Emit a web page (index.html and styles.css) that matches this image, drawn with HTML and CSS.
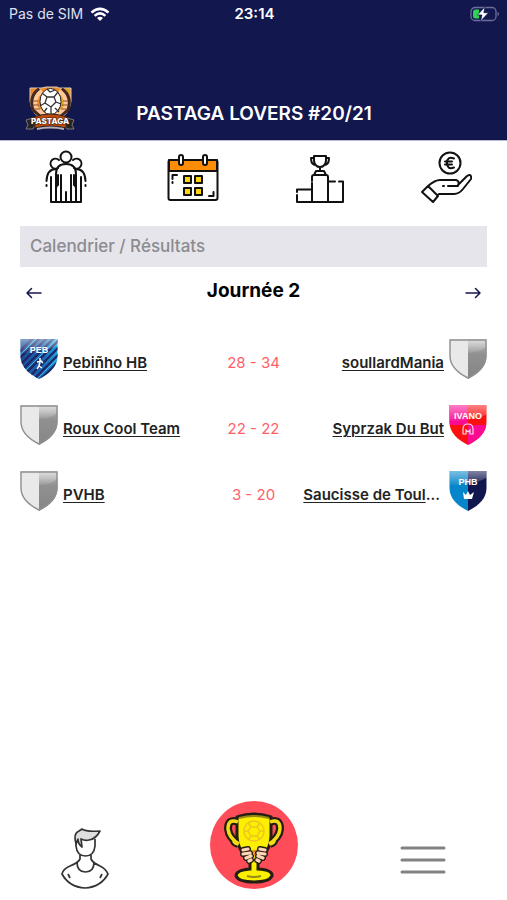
FILE: index.html
```html
<!DOCTYPE html>
<html lang="fr">
<head>
<meta charset="utf-8">
<meta name="viewport" content="width=device-width, initial-scale=1">
<title>Pastaga Lovers #20/21</title>
<link rel="stylesheet" href="styles.css">
</head>
<body>
<svg class="defs" width="0" height="0" aria-hidden="true">
  <defs>
    <linearGradient id="metal" x1="0" y1="0" x2="0" y2="1"><stop offset="0" stop-color="#c4c4c4"/><stop offset=".38" stop-color="#909090"/><stop offset="1" stop-color="#858585"/></linearGradient>
    <linearGradient id="sheen" x1="0" y1="0" x2="0" y2="1"><stop offset="0" stop-color="#fff" stop-opacity=".5"/><stop offset="1" stop-color="#fff" stop-opacity=".06"/></linearGradient>
    <linearGradient id="peb" x1="0" y1="0" x2="1" y2="0"><stop offset="0" stop-color="#1a4f9b"/><stop offset=".6" stop-color="#1a67b4"/><stop offset="1" stop-color="#1ba6e4"/></linearGradient>
    <clipPath id="shape"><path d="M0.500 1H37.500V18C37.500 29 29 36 19 41C9 36 .500 29 .500 18Z"/></clipPath>
    <symbol id="shield" viewBox="0 0 38 42">
      <g clip-path="url(#shape)"><path d="M0 0H19V42H0Z" fill="#e9e9e9"/><path d="M19 0H38V42H19Z" fill="url(#metal)"/><path d="M19 1H38V8Q31 15 19 15Z" fill="url(#sheen)"/></g>
      <path d="M1 2H37V18C37 28 29 35 19 40C9 35 1 28 1 18Z" fill="none" stroke="#8f8f8f" stroke-width="1.400"/>
    </symbol>
  </defs>
</svg>
<div class="screen">
  <header class="top">
    <div class="status">
      <div class="carrier"><span>Pas de SIM</span>
        <svg width="20" height="15" viewBox="0 0 20 15" fill="none" stroke="#fff" stroke-width="2.600"><path d="M1.500 5.600Q10-2 18.500 5.600M4.600 8.900Q10 4 15.400 8.900"/><path d="M7 11Q10 8.600 13 11L10 14Z" fill="#fff" stroke="none"/></svg>
      </div>
      <time>23:14</time>
      <svg class="battery" width="31" height="16" viewBox="0 0 31 16"><rect x="2" y="1.500" width="25" height="13" rx="4" fill="none" stroke="#6c6d98" stroke-width="1.300"/><path d="M28.500 6v4q1.500-.600 1.500-2t-1.500-2" fill="#6c6d98"/><path d="M6.500 3.500H10V12.500H6.500Q4 12.500 4 10V6Q4 3.500 6.500 3.500" fill="#31d158"/><path d="M16 .800L8.500 9H13L11.500 15.200L19.500 6.700H14.800Z" fill="#fff" stroke="#12174e" stroke-width=".700"/></svg>
    </div>
    <div class="brand">
      <svg class="crest" width="50" height="46" viewBox="0 0 50 46">
        <path d="M5 2H17L21 1H32L34 2H46V15Q45 26 37 31H14Q6 26 5 15Z" fill="#ef8b22" stroke="#d6cec8"/>
        <path d="M35 3H45V15Q44 23 37 29Z" fill="#dfa51b"/>
        <path d="M15 4Q6 10 9 23L18 30M36 4Q45 10 42 23L33 30" stroke="#432a21" stroke-width="6" fill="none"/>
        <path d="M17 5Q8 11 11 22L19 29M34 5Q43 11 40 22L32 29" stroke="#ffc99b" stroke-width="4" fill="none"/>
        <path d="M8 15h5M8 19h6M9 23h6M43 15h-5M43 19h-6M42 23h-6" stroke="#8b4d2b" stroke-width="1"/>
        <ellipse cx="25.500" cy="15.500" rx="10.500" ry="13" fill="#fff" stroke="#242125"/>
        <path d="M22 11h7l2 5-5 5-6-4ZM17 7l5 4M29 11l4-5M31 16l5 2M26 21v7M20 17l-5 3M19 26l3-4M30 22l4 4M22 3l3 3 5-2" fill="none" stroke="#333" stroke-width="1.300"/>
        <path d="M1 34L11 31V37L8 43H1L3 39ZM49 34L39 31V37L42 43H49L47 39Z" fill="#292421" stroke="#a39b99" stroke-width=".700"/>
        <path d="M9 31Q25 25 42 31L41 42Q25 38 10 42Z" fill="#bd4a08" stroke="#302724"/>
        <path d="M12 43Q25 40 39 43" stroke="#b7b0b7" stroke-width="2" fill="none"/>
        <text x="25" y="38" class="crest-text">PASTAGA</text>
      </svg>
      <h1>PASTAGA LOVERS #20/21</h1>
    </div>
  </header>
  <nav class="tabs" aria-label="Ligue">
    <a href="#equipes" aria-label="Équipes">
      <svg class="line" width="52" height="54" viewBox="0 0 52 54"><circle cx="26" cy="7" r="5.500"/><path d="M19 10A5 5 0 1 0 18 18M33 10A5 5 0 1 1 34 18"/><path d="M16 38V24Q16 14 26 14T36 24V38M16 38Q17 35 18 35V25M36 38Q35 35 34 35V25M21 25V51M31 25V51M26 42V51M16 38V51M36 38V51M11 27V52H41V27M16 19Q7 19 6.500 31M36 19Q45 19 45.500 31M6.500 35v1M45.500 35v1"/></svg>
    </a>
    <a href="#calendrier" aria-label="Calendrier" aria-current="page">
      <svg class="line" width="52" height="54" viewBox="0 0 52 54"><rect x="1.500" y="10" width="49" height="40" rx="2" fill="#fff"/><path d="M2 10H50V21H2Z" fill="#ff8c05"/><rect x="12" y="5" width="4" height="10" rx="2" fill="#fff"/><rect x="36" y="5" width="4" height="10" rx="2" fill="#fff"/><path d="M17 26h7v7h-7ZM28 26h7v7h-7ZM17 38h7v7h-7ZM28 38h7v7h-7Z" fill="#ffd510"/><path d="M5.500 29V25H10M5.500 32v1M46.500 42V46H42"/></svg>
    </a>
    <a href="#classement" aria-label="Classement">
      <svg class="line" width="52" height="54" viewBox="0 0 52 54"><path d="M20 6H32V11Q31 17 26 17T20 11ZM20 8H17Q17 15 22 15M32 8H35Q35 15 30 15M26 17V21M22 21H30L32 25H20ZM18 31V27Q18 25 20 25H32Q34 25 34 27V52M18 33V52M3 42V39.500H18M3 45V52H49V32M34 31.500H41M45 31.500H49V36"/></svg>
    </a>
    <a href="#paris" aria-label="Paris">
      <svg class="line" width="52" height="54" viewBox="0 0 52 54"><circle cx="29" cy="13" r="10.500"/><path d="M33 8.500Q26 6 26 13T33 17.500M24 11.500H31M24 14.500H31M1 42L7 36L17 46L12 52ZM7 36Q14 30 19 30H35Q39 31 37 36H27M22 36h1M37 35L46 26Q51 23 50 29L42 39Q38 44 33 44H18L16 46"/></svg>
    </a>
  </nav>
  <main>
    <h2 class="section">Calendrier / Résultats</h2>
    <div class="day">
      <button type="button" aria-label="Journée précédente"><svg width="18" height="14" viewBox="0 0 18 14"><path d="M16 7H2M6.500 2.500L2 7L6.500 11.500"/></svg></button>
      <h3>Journée 2</h3>
      <button type="button" aria-label="Journée suivante"><svg width="18" height="14" viewBox="0 0 18 14"><path d="M2 7H16M11.500 2.500L16 7L11.500 11.500"/></svg></button>
    </div>
    <ul class="matches">
      <li>
        <div class="team">
          <svg class="badge" viewBox="0 0 38 42"><g clip-path="url(#shape)"><path d="M0 0H38V42H0Z" fill="url(#peb)"/><path d="M-5 18L18-5M-5 25L25-5M-3 30L33-6M0 34L40-6M3 38L41 0M7 41L43 5M12 43L44 11M17 45L47 15" stroke="#202461" stroke-width="2.200"/><path d="M-4 21L22-5M2 36L42-4M14 44L46 12" stroke="#39b6e4" stroke-width="1"/><path d="M0 0H38V7Q26 15 0 15Z" fill="url(#sheen)"/></g><text x="19" y="15" class="badge-text">PEB</text><path d="M20 20v3M17 24l4-1 2 2M20 24l-1 4-2 3M19 28l3 2" fill="none" stroke="#fff" stroke-width="1.500"/></svg>
          <a href="#pebinho">Pebiñho HB</a>
        </div>
        <span class="score">28 - 34</span>
        <div class="team away"><a href="#soullard">soullardMania</a><svg class="badge"><use href="#shield"/></svg></div>
      </li>
      <li>
        <div class="team"><svg class="badge"><use href="#shield"/></svg><a href="#roux">Roux Cool Team</a></div>
        <span class="score">22 - 22</span>
        <div class="team away"><a href="#syprzak">Syprzak Du But</a>
          <svg class="badge" viewBox="0 0 38 42"><g clip-path="url(#shape)"><path d="M0 0H38V42H0Z" fill="#fb1010"/><path d="M0 0H19V21H0ZM19 21H38V42H19Z" fill="#fa0b91"/><path d="M0 0H38V10Q27 17 0 17Z" fill="url(#sheen)"/></g><text x="19" y="15" class="badge-text">IVANO</text><path d="M14 30V25Q14 20 19 20T24 25V30H21V26L19 28L17 26V30Z" fill="none" stroke="#ffd8ec" stroke-width="1.200"/></svg>
        </div>
      </li>
      <li>
        <div class="team"><svg class="badge"><use href="#shield"/></svg><a href="#pvhb">PVHB</a></div>
        <span class="score">3 - 20</span>
        <div class="team away"><a href="#saucisse"><span>Saucisse de Toul</span>...</a>
          <svg class="badge" viewBox="0 0 38 42"><g clip-path="url(#shape)"><path d="M0 0H19V42H0Z" fill="#0785ca"/><path d="M19 0H38V42H19Z" fill="#11164e"/><path d="M0 0H38V7Q28 15 0 15Z" fill="url(#sheen)"/></g><text x="19" y="15" class="badge-text">PHB</text><path d="M14 22L17 25L19 21L21 25L25 22L23 29H15Z" fill="#fff"/></svg>
        </div>
      </li>
    </ul>
  </main>
  <nav class="dock" aria-label="Navigation principale">
    <a href="#profil" aria-label="Profil"><svg width="48" height="62" viewBox="0 0 48 62" fill="none" stroke="#333" stroke-width="1.700" stroke-linejoin="round"><path d="M19 28V32Q17 36 9 39Q2 42 1 47Q8 60 24 61Q40 60 47 47Q45 42 39 39Q32 36 30 32V28M16 35Q16 45 24.500 45T33 35M7 47L9 51M41 47L39 51"/><path d="M15 12V19Q16 29 24.500 29Q33 29 34 19V12"/><path d="M15 17Q12 6 18 4L21 2Q25 5 39 4Q35 12 28 13Q24 14 20 12L21 20Q17 17 17 12Z" fill="#dedede"/></svg></a>
    <a class="cup" href="#ligues" aria-label="Ligues"><svg width="88" height="88" viewBox="1 1 88 88">
      <g fill="none" stroke="#241d13" stroke-width="8"><path d="M29 22Q19 18 19 29Q20 38 30 44M61 22Q71 18 71 29Q70 38 60 44M26 39q-3 3 3 5M64 39q3 3-3 5"/></g>
      <path d="M28 17Q45 11 62 17V36Q61 53 49 58V69Q64 70 63 76Q60 82 45 82T27 76Q27 70 41 69V58Q29 53 28 36Z" fill="#fcf000" stroke="#241d13" stroke-width="3"/>
      <path d="M29 22Q19 18 19 29Q20 38 30 44M61 22Q71 18 71 29Q70 38 60 44M26 39q-3 3 3 5M64 39q3 3-3 5" fill="none" stroke="#f2dd15" stroke-width="3.500"/>
      <path d="M30 18Q45 14 60 18M38 76Q45 78 52 76" fill="none" stroke="#958a18" stroke-width="2"/>
      <g fill="none" stroke="#ecc521" stroke-width="1.400"><circle cx="45" cy="31" r="10"/><path d="M42 27h6l3 4-3 5h-6l-3-5ZM42 27l-3-4M48 27l3-4M51 31h4M48 36l3 4M42 36l-3 4M39 31h-4"/></g>
      <path d="M43 50h5l-2 7Z" fill="#ef8920"/>
      <g stroke="#241d13" stroke-width="6" stroke-linecap="round"><path d="M34 50l5-1M34 54l7-1M37 58l5-2M40 61l2-1M56 50l-5-1M56 54l-7-1M54 58l-5-2M50 61l-2-1"/></g>
      <g stroke="#ffd6b3" stroke-width="3.200" stroke-linecap="round"><path d="M34 50l5-1M34 54l7-1M37 58l5-2M40 61l2-1M56 50l-5-1M56 54l-7-1M54 58l-5-2M50 61l-2-1"/></g>
    </svg></a>
    <button type="button" aria-label="Menu"><svg width="46" height="28" viewBox="0 0 46 28" stroke="#828282" stroke-width="3" stroke-linecap="round"><path d="M2 2H44M2 14H44M2 26H44"/></svg></button>
  </nav>
</div>
</body>
</html>
```

FILE: styles.css
```css
* { box-sizing: border-box; }
body { margin: 0; background: #fff; color: #111; font-family: Inter, "Liberation Sans", sans-serif; }
svg { display: block; flex: none; }
.defs { position: absolute; }
h1, h2, h3, ul { margin: 0; padding: 0; }
button { border: 0; padding: 0; background: none; }
.screen { min-height: 100vh; display: flex; flex-direction: column; }

.top { background: #12174e; color: #fff; padding-bottom: 8px; border-bottom: 1px solid #b9bad2; }
.status { display: grid; grid-template-columns: 1fr auto 1fr; align-items: center; height: 28px; padding: 0 7px 0 9px; font-size: 14px; line-height: 20px; }
.status time { font-size: 15px; font-weight: 600; }
.carrier { display: flex; align-items: center; gap: 7px; color: #dfe0ee; }
.battery { justify-self: end; }
.brand { display: grid; grid-template-columns: 50px 1fr 50px; align-items: center; padding: 58px 24px 0 25px; }
h1 { text-align: center; font-size: 19px; line-height: 28px; font-weight: 600; padding-top: 10px; white-space: nowrap; }
.crest-text { font: 800 8px Inter, sans-serif; text-anchor: middle; fill: #fff; stroke: #3b2116; stroke-width: 1px; paint-order: stroke; }

.tabs { display: flex; justify-content: space-between; padding: 9px 34px 0 40px; }
.line { fill: none; stroke: #111; stroke-width: 2; stroke-linecap: round; stroke-linejoin: round; overflow: visible; }

main { flex: 1; padding: 22px 20px 0; }
.section { background: #e6e5eb; color: #8b8b90; padding: 8px 10px; font-size: 17px; line-height: 25px; font-weight: 500; }
.day { display: flex; justify-content: space-between; align-items: center; height: 48px; padding: 0 5px; color: #000; }
.day svg { fill: none; stroke: #17164e; stroke-width: 1.5; stroke-linecap: round; stroke-linejoin: round; margin-top: 4px; }
h3 { font-size: 19px; line-height: 28px; font-weight: 700; }
.matches { list-style: none; padding-top: 11px; }
.matches li { display: grid; grid-template-columns: 1fr auto 1fr; align-items: center; height: 66px; }
.team { display: flex; align-items: center; gap: 5px; font-size: 15px; line-height: 20px; font-weight: 600; white-space: nowrap; }
.team a { color: #222; padding-top: 8px; text-underline-offset: 2px; text-decoration-thickness: 1px; }
.team a:has(span) { text-decoration: none; padding-right: 4px; }
.team a span { text-decoration: underline; text-decoration-thickness: 1px; }
.away { justify-content: flex-end; }
.badge { width: 38px; height: 42px; }
.badge-text { font: 700 9px "Liberation Sans", sans-serif; text-anchor: middle; fill: #fff; }
.score { color: #ff5f6a; font-size: 15px; line-height: 20px; padding-top: 8px; }

.dock { display: grid; grid-template-columns: repeat(3, 1fr); justify-items: center; align-items: end; padding-bottom: 11px; }
.cup { border-radius: 50%; background: #ff4c59; }
.dock button { padding-bottom: 15px; }
```
